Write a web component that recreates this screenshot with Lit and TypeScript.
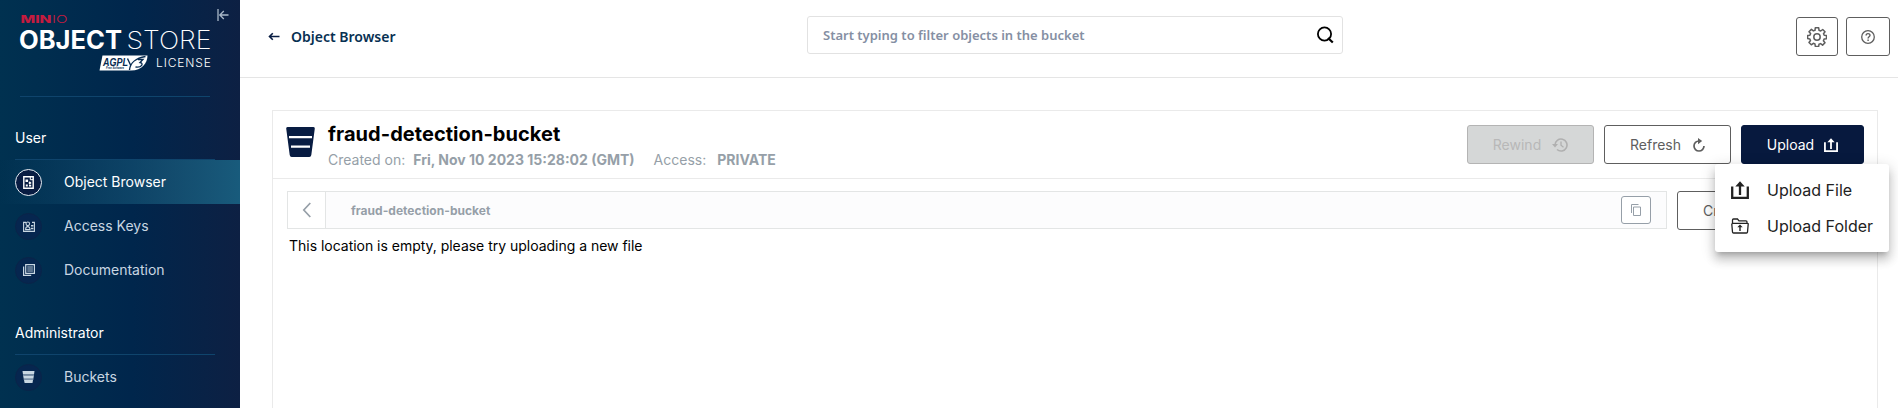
import { LitElement, html, css, svg, nothing } from "lit";
import { customElement, property } from "lit/decorators.js";

const icons: Record<string, unknown> = {
  browser: svg`<svg width="11" height="13" viewBox="0 0 11 13"><path d="M.8.8H10.200V12.200H.8Z" fill="none" stroke="#fff" stroke-width="1.400"/><path d="M7.300 1V3.700H10" fill="none" stroke="#fff"/><path d="M2.500 3.500h2.600v2.400H2.500zM2.800 8.500h2v2h-2zM6.700 5.300l1.900 1.600-1.900 1.600L5.400 6.900zM6 8.800h2.200v1.800H6z" fill="#fff"/></svg>`,
  keys: svg`<svg width="12" height="11" viewBox="0 0 12 11"><path d="M3 1.400H.6v9h10.800v-9H9" fill="none" stroke="#c8d6e2" stroke-width="1.100"/><circle cx="4.800" cy="2.800" r="1.800" fill="none" stroke="#c8d6e2" stroke-width="1.100"/><path d="M2.600 8.600c0-4 4.400-4 4.400 0z" fill="none" stroke="#c8d6e2" stroke-width="1.100"/><path d="M8 4h2.400v1.500H8zM8 6.700h2.400v1.500H8z" fill="#c8d6e2"/></svg>`,
  docs: svg`<svg width="12" height="12" viewBox="0 0 12 12"><path d="M2.700.6h8.700v8.700H2.700zM.6 2.600v8.800h7.600" fill="none" stroke="#c8d6e2" stroke-width="1.200"/><path d="M4.300 3h5.600M4.300 5h5.600M4.300 7h5.600" stroke="#c8d6e2" stroke-width=".9"/></svg>`,
  bucket: svg`<svg width="13" height="12" viewBox="0 0 13 12"><path d="M.5 0h12l-.5 3.600H1zM1.200 5h10.600l-.4 2.800H1.700zM2 9h9l-.5 3H2.600z" fill="#c8d6e2"/><path d="M1 3.600h11v1.400H1zM1.700 7.800h9.700v1.200H1.700z" fill="#7d92aa"/></svg>`,
};

const uploadIcon = (size: number, color: string) => html`<svg width=${size} height=${size} viewBox="0 0 18 18">
  <path d="M1.200 5.500V16.800H16.800V5.500" fill="none" stroke=${color} stroke-width="2.300"/>
  <path d="M9 14V3" stroke=${color} stroke-width="2.300"/>
  <path d="M4.300 5.600 9 0.300 13.700 5.600Z" fill=${color}/>
</svg>`;

@customElement("nav-item")
class NavItem extends LitElement {
  @property() label = "";
  @property() icon = "";
  @property({ type: Boolean, reflect: true }) active = false;
  static styles = css`
    :host { display: flex; align-items: center; height: 44px; padding-left: 15px; color: #c8d6e2; font-size: 14px; }
    :host([active]) { color: #fff; background: linear-gradient(90deg, rgba(24, 91, 124, 0) 0%, #185b7c 100%); }
    .ring { width: 25px; height: 25px; border: 1px solid #0a2449; border-radius: 50%; background: #06264f; display: flex; align-items: center; justify-content: center; margin-right: 22px; }
    :host([active]) .ring { border-color: #e8eef4; background: #081c42; }
    .label { padding-bottom: 1px; }
    svg { display: block; }
  `;
  render() {
    return html`<span class="ring">${icons[this.icon] ?? nothing}</span><span class="label">${this.label}</span>`;
  }
}

@customElement("side-bar")
class SideBar extends LitElement {
  static styles = css`
    :host { display: block; width: 240px; height: 408px; flex: none; overflow: hidden; position: relative;
      background: linear-gradient(90deg, #003150 0%, #00264c 55%, #0d2043 100%); }
    .brand { display: block; }
    .rule { height: 1px; background: #0f446c; }
    .rule.top { margin: 0 30px 0 20px; }
    .rule.group { margin: 0 25px 0 15px; }
    .heading { color: #fff; font-size: 14px; line-height: 20px; padding-left: 15px; }
    .user { margin: 31px 0 11px; }
    .admin { margin: 31px 0 11px; }
    .collapse { position: absolute; left: 217px; top: 9px; }
  `;
  render() {
    return html`
      <svg class="brand" width="240" height="96" viewBox="0 0 240 96">
        <text x="20.500" y="22.500" font-family="Inter" font-weight="800" font-size="10" fill="#c51b3f" textLength="31" lengthAdjust="spacingAndGlyphs">MIN</text>
        <text x="52" y="22.500" font-family="Inter" font-weight="300" font-size="10" fill="#c51b3f" textLength="15.500" lengthAdjust="spacingAndGlyphs">IO</text>
        <text x="19" y="48.700" font-family="Inter" font-weight="700" font-size="25" fill="#fff" textLength="103" lengthAdjust="spacingAndGlyphs">OBJECT</text>
        <text x="126.500" y="48.700" font-family="Inter" font-weight="200" font-size="25" fill="#fff" textLength="85" lengthAdjust="spacingAndGlyphs">STORE</text>
        <path d="M102.500 55.500H147.500C147.500 63 142 70.500 131 70.500H99.500Z" fill="#fff"/>
        <text x="103" y="66.300" font-family="Liberation Sans" font-style="italic" font-weight="700" font-size="11.500" fill="#062a50" textLength="25" lengthAdjust="spacingAndGlyphs">AGPL</text>
        <text x="106" y="69.400" font-family="Liberation Sans" font-style="italic" font-weight="700" font-size="3" fill="#062a50" textLength="18" lengthAdjust="spacingAndGlyphs">Free Software</text>
        <path d="M127.500 58.500l3.500 7.500M129.500 70C130 63 136 58 145.500 56.500" fill="none" stroke="#062a50" stroke-width="1.400"/>
        <path d="M138 59.500h5l-3 3c4 .5 2 5.500-4.500 4.500" fill="none" stroke="#062a50" stroke-width="1.300"/>
        <text x="156" y="66.500" font-family="Inter" font-weight="300" font-size="12" fill="#fff" textLength="55" lengthAdjust="spacing">LICENSE</text>
      </svg>
      <svg class="collapse" width="12" height="12" viewBox="0 0 12 12"><path d="M1 0v12M11.500 6H3.200M6.800 2 2.800 6l4 4" fill="none" stroke="#a9b8c8" stroke-width="1.300"/></svg>
      <div class="rule top"></div>
      <div class="heading user">User</div>
      <div class="rule group"></div>
      <nav-item active icon="browser" label="Object Browser"></nav-item>
      <nav-item icon="keys" label="Access Keys"></nav-item>
      <nav-item icon="docs" label="Documentation"></nav-item>
      <div class="heading admin">Administrator</div>
      <div class="rule group"></div>
      <nav-item icon="bucket" label="Buckets"></nav-item>
      <nav-item></nav-item>
    `;
  }
}

@customElement("app-root")
class AppRoot extends LitElement {
  static styles = css`
    :host { display: flex; height: 408px; overflow: hidden; background: #fff; font-family: Inter, sans-serif; color: #000; }
    * { box-sizing: border-box; }
    svg { display: block; flex: none; }
    main { flex: 1; min-width: 0; }
    header { height: 78px; border-bottom: 1px solid #e5e5e5; display: grid; grid-template-columns: 567px 536px 1fr; padding: 0 8px 0 0; }
    .back { display: flex; align-items: center; height: 38px; margin-top: 17px; padding-left: 28px; gap: 11px; font: 600 14px/20px "Noto Sans", sans-serif; color: #073052; }
    .back span { padding-top: 2px; }
    .search { display: flex; align-items: center; justify-content: space-between; height: 38px; margin-top: 16px; border: 1px solid #e2e2e2; border-radius: 3px; padding: 0 8px 0 15px; font: 600 13px/20px "Noto Sans", sans-serif; color: #858fa3; }
    .tools { display: flex; justify-content: flex-end; gap: 8px; margin-top: 17px; }
    .btn { display: flex; align-items: center; justify-content: center; height: 39px; border: 1px solid #5e5e5e; border-radius: 3px; background: #fff; color: #5e5e5e; font: 400 14px/20px Inter, sans-serif; }
    .gear { width: 42px; }
    .help { width: 44px; }
    .panel { margin: 32px 20px 0 32px; height: 320px; border: 1px solid #eaeaea; }
    .top { height: 68px; display: flex; border-bottom: 1px solid #eaeaea; padding: 14px 13px 0; }
    .pail { margin: 2px 13px 0 0; }
    .info { flex: 1; }
    h1 { font: 700 20px/20px Inter, sans-serif; letter-spacing: .05px; margin: -1px 0 0; }
    .meta { display: flex; margin-top: 7px; font-size: 14px; line-height: 17px; color: #969fa8; }
    .meta b { margin: 0 19px 0 8px; }
    .meta b.acc { margin-left: 11px; }
    .actions { display: flex; gap: 10px; }
    .rewind { width: 127px; gap: 11px; background: #d5d7d7; border-color: #b4b4b4; color: #b8b8b8; }
    .refresh { width: 127px; gap: 12px; }
    .upload { width: 123px; gap: 10px; background: #07193e; border-color: #07193e; color: #fff; }
    .pathrow { display: flex; gap: 10px; padding: 12px 13px 0 14px; }
    .crumbs { flex: 1; height: 38px; display: flex; align-items: center; border: 1px solid #e3e5e5; background: #fcfcfd; padding-right: 15px; }
    .prev { width: 38px; height: 36px; background: #fff; border-right: 1px solid #e3e5e5; display: flex; align-items: center; justify-content: center; }
    .crumb { flex: 1; padding-left: 25px; font-size: 12px; font-weight: 700; letter-spacing: .03px; color: #969fa8; }
    .copy { width: 30px; height: 28px; border: 1px solid #969fa8; border-radius: 3px; background: #fff; display: flex; align-items: center; justify-content: center; }
    .create { width: 187px; justify-content: flex-start; padding-left: 25px; }
    .empty { font-size: 14px; line-height: 20px; padding: 6px 16px; letter-spacing: -.02px; }
    .menu { position: absolute; left: 1715px; top: 164px; width: 174px; height: 88px; background: #fff; border-radius: 3px; padding: 8px 16px; box-shadow: 0 5px 5px -3px rgba(0,0,0,.2), 0 8px 10px 1px rgba(0,0,0,.14), 0 3px 14px 2px rgba(0,0,0,.12); }
    .row { display: flex; align-items: center; gap: 18px; height: 36px; font-size: 16px; color: #222; white-space: nowrap; }
  `;
  render() {
    return html`
      <side-bar></side-bar>
      <main>
        <header>
          <div class="back">
            <svg width="12" height="9" viewBox="0 0 12 9"><path d="M11.500 4.500H2M4.800 1.200 1.500 4.500 4.800 7.800" fill="none" stroke="#081c42" stroke-width="1.600"/></svg>
            <span>Object Browser</span>
          </div>
          <div class="search">
            <span>Start typing to filter objects in the bucket</span>
            <svg width="18" height="18" viewBox="0 0 18 18"><circle cx="8.500" cy="8" r="6.600" fill="none" stroke="#000" stroke-width="1.800"/><path d="M12 12 16.800 16.500" stroke="#000" stroke-width="2.200"/></svg>
          </div>
          <div class="tools">
            <div class="btn gear">
              <svg width="20" height="20" viewBox="0 0 20 20"><path d="M8.300.8h3.400l.3 2.500 1.700.7 2-1.500 2.300 2.300-1.500 2 .7 1.500 2.300.2v3.200l-2.400.4-.7 1.600 1.600 2-2.400 2.400-2-1.500-1.600.6-.3 2.200H8.300L8 17l-1.700-.7-2 1.500L2 15.500l1.500-2-.7-1.600-2.200-.3V8.500l2.300-.3.7-1.600L2 4.700l2.400-2.300 2 1.500L8 3.300z" fill="none" stroke="#5e5e5e" stroke-width="1.500" stroke-linejoin="round"/><circle cx="10" cy="10" r="3.200" fill="none" stroke="#5e5e5e" stroke-width="1.500"/></svg>
            </div>
            <div class="btn help">
              <svg width="14" height="14" viewBox="0 0 14 14"><circle cx="7" cy="7" r="6.300" fill="none" stroke="#5e5e5e" stroke-width="1.300"/><path d="M5.100 5.500c0-2.500 3.900-2.400 3.900-.2C9 6.800 7.100 6.700 7.100 8.400M7.100 9.400v1.600" fill="none" stroke="#5e5e5e" stroke-width="1.400"/></svg>
            </div>
          </div>
        </header>
        <section class="panel">
          <div class="top">
            <svg class="pail" width="29" height="30" viewBox="0 0 29 30"><path d="M1.500 0h26q1.500 0 1.300 1.500L25.300 28q-.3 2-2 2H5.700q-1.700 0-2-2L.2 1.500Q0 0 1.500 0z" fill="#081c42"/><path d="M3 9h23v2.200H3zM5 18.500h19v2.200H5z" fill="#fff"/></svg>
            <div class="info">
              <h1>fraud-detection-bucket</h1>
              <div class="meta"><span>Created on:</span><b>Fri, Nov 10 2023 15:28:02 (GMT)</b><span>Access:</span><b class="acc">PRIVATE</b></div>
            </div>
            <div class="actions">
              <div class="btn rewind"><span>Rewind</span>
                <svg width="16" height="14" viewBox="0 0 16 14"><path d="M3 7a6 6 0 1 1 2 4.500" fill="none" stroke="#b0b0b0" stroke-width="1.600"/><path d="M0 6h6L3 9.500z" fill="#b0b0b0"/><path d="M9 3.500V7.300l2.500 2" fill="none" stroke="#b0b0b0" stroke-width="1.300"/></svg>
              </div>
              <div class="btn refresh"><span>Refresh</span>
                <svg width="12" height="14" viewBox="0 0 12 14"><path d="M6 3A5 5 0 1 0 11 8" fill="none" stroke="#5e5e5e" stroke-width="1.700"/><path d="M5 0 9.200 3.100 5 6.200z" fill="#5e5e5e"/></svg>
              </div>
              <div class="btn upload"><span>Upload</span>${uploadIcon(14, "#fff")}</div>
            </div>
          </div>
          <div class="pathrow">
            <div class="crumbs">
              <div class="prev"><svg width="9" height="16" viewBox="0 0 9 16"><path d="M8.300 1 1.800 8 8.300 15" fill="none" stroke="#969fa8" stroke-width="1.700"/></svg></div>
              <span class="crumb">fraud-detection-bucket</span>
              <div class="copy"><svg width="10" height="12" viewBox="0 0 10 12"><path d="M.5 9V.5H7.500M2.500 3h7v8.500h-7z" fill="none" stroke="#969fa8"/></svg></div>
            </div>
            <div class="btn create">Create new path</div>
          </div>
          <div class="empty">This location is empty, please try uploading a new file</div>
        </section>
      </main>
      <div class="menu">
        <div class="row">${uploadIcon(18, "#222")}<span>Upload File</span></div>
        <div class="row">
          <svg width="18" height="16" viewBox="0 0 18 16"><path d="M1.500 5V2Q1.500 1 2.500 1H6.500L8 2.800H15Q16 2.800 16 4V5M1.900 5.300H16.200Q17.300 5.300 17.200 6.300L16.500 14Q16.400 15 15.500 15H2.500Q1.600 15 1.500 14L.8 6.300Q.8 5.300 1.900 5.300" fill="none" stroke="#222" stroke-width="1.300"/><path d="M9 13V8" stroke="#222" stroke-width="1.400"/><path d="M6.300 9.300 9 6.500l2.700 2.800z" fill="#222"/></svg>
          <span>Upload Folder</span>
        </div>
      </div>
    `;
  }
}
